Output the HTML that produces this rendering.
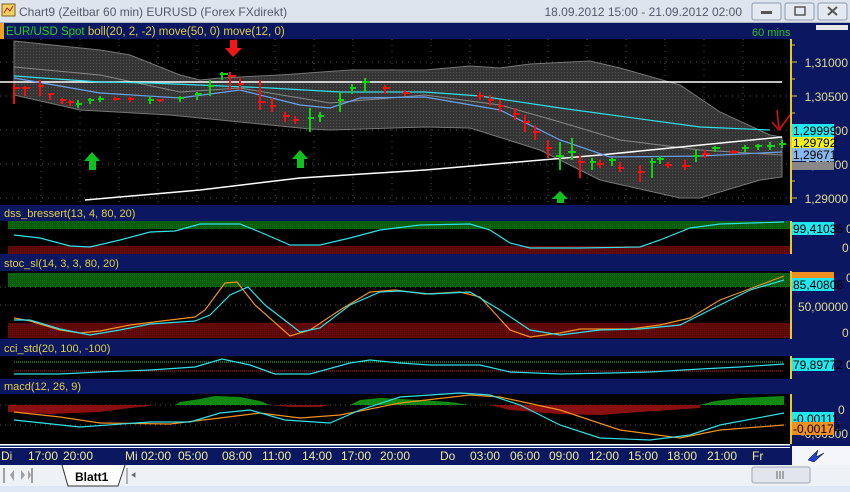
<!DOCTYPE html>
<html><head><meta charset="utf-8"><style>
html,body{margin:0;padding:0;width:850px;height:492px;overflow:hidden;background:#dfe6ef;font-family:"Liberation Sans",sans-serif}
svg{display:block}
</style></head><body>
<svg width="850" height="492" viewBox="0 0 850 492" xmlns="http://www.w3.org/2000/svg" font-family="Liberation Sans, sans-serif">
<defs>
<pattern id="dots" width="3" height="3" patternUnits="userSpaceOnUse"><rect width="3" height="3" fill="#353535"/><rect width="1" height="1" fill="#505050"/></pattern>
<pattern id="gdots" width="2" height="2" patternUnits="userSpaceOnUse"><rect width="2" height="2" fill="#0c5a0c"/><rect width="1" height="1" fill="#0a7010"/></pattern>
<pattern id="rdots" width="2" height="2" patternUnits="userSpaceOnUse"><rect width="2" height="2" fill="#5a0808"/><rect width="1" height="1" fill="#700c0c"/></pattern>
</defs>
<!-- title bar -->
<rect x="0" y="0" width="850" height="23" fill="#dde4ee"/>
<rect x="0" y="22" width="850" height="1" fill="#aab4c4"/>
<rect x="2" y="4" width="13" height="12" fill="#f4d060" stroke="#806020" stroke-width="1"/>
<path d="M4 13 L7 8 L10 11 L13 6" stroke="#c02020" fill="none"/>
<text x="19" y="16" font-size="12" fill="#505a6a">Chart9 (Zeitbar 60 min)  EURUSD (Forex FXdirekt)</text>
<text x="742" y="16" font-size="12" fill="#505a6a" text-anchor="end">18.09.2012 15:00 - 21.09.2012 02:00</text>
<g fill="#e4e9f1" stroke="#8e9aae"><rect x="752" y="3" width="29" height="17" rx="2"/><rect x="785" y="3" width="29" height="17" rx="2"/><rect x="818" y="3" width="29" height="17" rx="2"/></g>
<rect x="761" y="11" width="11" height="3" fill="#555"/>
<rect x="795" y="7" width="10" height="8" fill="none" stroke="#555" stroke-width="1.5"/>
<path d="M828 7 L837 15 M837 7 L828 15" stroke="#555" stroke-width="2"/>
<!-- navy backgrounds -->
<rect x="0" y="23" width="850" height="442" fill="#0b1760"/>
<!-- main chart -->
<rect x="0" y="39" width="790" height="166" fill="#000"/>
<rect x="0" y="23" width="4" height="16" fill="#f0a020"/>
<text x="6" y="35" font-size="11.5" fill="#20d020">EUR/USD Spot <tspan fill="#e0d040">boll(20, 2, -2) move(50, 0) move(12, 0)</tspan></text>
<text x="752" y="36" font-size="11" fill="#20c020">60 mins</text>
<rect x="816" y="25" width="32" height="5" fill="#e8e8e8"/>
<!-- grid -->
<g stroke="#555" stroke-dasharray="1,5">
<path d="M0 62H790M0 96H790M0 130H790M0 164H790M0 198H790"/>
<path d="M41 39V205M80 39V205M119 39V205M158 39V205M197 39V205M236 39V205M275 39V205M314 39V205M353 39V205M392 39V205M431 39V205M470 39V205M509 39V205M548 39V205M587 39V205M626 39V205M665 39V205M704 39V205M743 39V205"/>
</g>
<!-- bollinger -->
<path d="M14 41 L100 50 L130 55 L180 75 L200 80 L220 78 L280 75 L350 70 L425 70 L470 66 L500 68 L530 64 L590 61 L620 68 L680 85 L720 112 L770 135 L782 137 L782 177 L760 180 L700 198 L680 198 L600 180 L540 150 L470 128 L425 127 L330 130 L310 129 L270 125 L170 115 L80 110 L14 95 Z" fill="url(#dots)" stroke="#777" stroke-width="1"/>
<polyline points="14,67 100,75 180,92 240,88 330,103 425,95 500,105 560,122 620,140 700,150 782,155" fill="none" stroke="#888"/>
<line x1="0" y1="82" x2="782" y2="82" stroke="#fff" stroke-width="1.5"/>
<polyline points="85,200 200,190 300,178 425,170 600,155 782,137" fill="none" stroke="#fff" stroke-width="1.5"/>
<polyline points="14,76 100,82 150,83 270,88 340,92 425,92 480,96 560,108 700,127 770,130" fill="none" stroke="#30e0e8" stroke-width="1.2"/>
<polyline points="14,78 100,93 180,98 240,90 300,105 330,108 360,98 425,97 500,110 560,140 610,157 700,156 782,152" fill="none" stroke="#6aa0f0" stroke-width="1.2"/>
<!-- candles -->
<g stroke="#f01010" stroke-width="2" fill="none">
<path d="M14 84V104M14 88H20M25 86V96M22 88H30M40 80V96M38 86H44M50 93V100M48 94H54M62 98V104M60 100H66M70 100V106M68 102H74M115 97V101M113 99H120M130 97V102M128 99H134M160 99V102M157 100H164M230 72V90M228 76H236M240 78V90M238 84H244M260 80V110M258 102H266M272 98V112M270 106H276M285 112V122M283 116H290M295 116V124M293 120H299M385 85V94M383 88H390M405 90V96M403 93H410M480 92V100M477 96H484M490 95V106M488 100H494M500 100V112M498 106H504M515 108V120M513 114H520M525 115V132M523 122H530M535 125V140M533 132H540M548 140V158M546 148H552M580 155V178M578 162H585M600 160V168M597 164H604M620 162V172M618 168H624M640 165V182M638 172H645M668 162V168M665 165H672M685 160V170M682 166H690M705 150V158M702 154H710M733 150V154M730 152H738"/>
</g>
<g stroke="#10d010" stroke-width="2" fill="none">
<path d="M78 100V108M76 104H82M90 98V104M88 100H94M100 96V102M98 99H104M150 96V104M148 100H154M180 96V102M178 98H184M197 92V100M195 94H202M210 80V96M208 86H214M222 72V80M220 74H228M310 108V132M308 118H314M320 112V122M318 116H324M340 92V112M338 100H344M352 84V94M350 88H356M365 78V92M362 82H370M560 142V170M556 156H564M572 138V160M568 152H576M592 158V170M590 162H596M612 158V166M609 160H616M652 158V178M650 162H656M660 156V164M657 159H664M696 150V162M693 156H700M715 146V152M712 148H720M745 145V152M742 148H749M758 144V150M755 146H762M770 142V150M767 146H775M782 140V148M779 144H786"/>
</g>
<!-- arrows -->
<g fill="#f01818"><rect x="230" y="40" width="7" height="8"/><path d="M225 48 L242 48 L233 57Z"/></g>
<g fill="#10c020"><path d="M92 152 L100 161 L84 161Z"/><rect x="89" y="161" width="7" height="9"/>
<path d="M300 150 L308 159 L292 159Z"/><rect x="297" y="159" width="7" height="9"/>
<path d="M560 191 L568 199 L552 199Z"/><rect x="557" y="198" width="7" height="5"/></g>
<path d="M777 110 L779 128 M772 122 L779 130 L790 115" stroke="#e01010" stroke-width="1.5" fill="none"/>
<!-- main axis -->
<rect x="790" y="39" width="2" height="164" fill="#e8c830"/>
<g stroke="#e8c830"><path d="M792 45h3M792 62h5M792 79h3M792 96h5M792 113h3M792 130h5M792 147h3M792 164h5M792 181h3M792 198h5"/></g>
<g font-size="12" fill="#e0dc90" text-anchor="end"><text x="848" y="67">1,31000</text><text x="848" y="101">1,30500</text><text x="848" y="135">1,30000</text><text x="848" y="169">1,29500</text><text x="848" y="203">1,29000</text></g>
<rect x="792" y="162" width="42" height="8" fill="#888"/>
<rect x="792" y="124" width="42" height="13" fill="#20e8f0"/><text x="793" y="135" font-size="12" fill="#000">1,29999</text>
<rect x="792" y="137" width="42" height="11" fill="#f0f020"/><text x="793" y="147" font-size="12" fill="#000">1,29792</text>
<rect x="792" y="148" width="42" height="13" fill="#88b8f0"/><text x="793" y="159" font-size="12" fill="#000">1,29671</text>
<!-- dss -->
<text x="4" y="217" font-size="11" fill="#e0d040">dss_bressert(13, 4, 80, 20)</text>
<rect x="0" y="221" width="790" height="33" fill="#000"/>
<rect x="8" y="221" width="782" height="8" fill="url(#gdots)"/>
<rect x="8" y="246" width="782" height="8" fill="url(#rdots)"/>
<polyline points="14,235 40,238 70,246 90,247 120,240 150,232 175,231 200,224 240,224 260,232 290,245 320,245 350,238 380,230 420,225 470,224 490,230 510,243 530,248 580,248 640,247 660,240 690,228 720,224 784,222" fill="none" stroke="#30e0e8" stroke-width="1.2"/>
<rect x="790" y="221" width="2" height="33" fill="#e8c830"/>
<rect x="792" y="222" width="42" height="13" fill="#20e8f0"/><text x="793" y="233" font-size="12" fill="#000">99,41035</text>
<text x="846" y="233" font-size="12" fill="#e0dc90">0</text><text x="842" y="252" font-size="12" fill="#e0dc90">0</text>
<!-- stoc -->
<text x="4" y="267" font-size="11" fill="#e0d040">stoc_sl(14, 3, 3, 80, 20)</text>
<rect x="0" y="271" width="790" height="68" fill="#000"/>
<rect x="8" y="273" width="782" height="14" fill="url(#gdots)"/>
<rect x="8" y="323" width="782" height="15" fill="url(#rdots)"/>
<path d="M0 305H790M0 287H790" stroke="#555" stroke-dasharray="1,4"/>
<polyline points="14,318 30,321 60,330 80,333 100,331 130,325 170,320 195,317 205,310 225,283 237,282 255,305 290,336 310,330 340,310 370,292 395,290 425,294 460,292 480,297 510,330 530,337 560,333 580,329 630,329 660,325 690,318 720,300 760,285 784,276" fill="none" stroke="#f09020" stroke-width="1.2"/>
<polyline points="14,320 30,320 60,329 90,335 120,330 150,324 195,321 210,315 230,295 248,287 265,305 300,332 320,328 350,305 380,292 400,291 430,294 470,292 500,310 530,330 560,335 600,330 640,329 680,325 710,310 750,290 784,280" fill="none" stroke="#30e0e8" stroke-width="1.2"/>
<rect x="790" y="271" width="2" height="68" fill="#e8c830"/>
<rect x="792" y="272" width="42" height="6" fill="#f09020"/>
<rect x="792" y="278" width="42" height="13" fill="#20e8f0"/><text x="793" y="289" font-size="12" fill="#000">85,40808</text>
<text x="846" y="282" font-size="12" fill="#e0dc90">0</text>
<text x="848" y="311" font-size="12" fill="#e0dc90" text-anchor="end">50,00000</text>
<text x="842" y="337" font-size="12" fill="#e0dc90">0</text>
<!-- cci -->
<text x="4" y="352" font-size="11" fill="#e0d040">cci_std(20, 100, -100)</text>
<rect x="0" y="356" width="790" height="23" fill="#000"/>
<line x1="14" y1="362" x2="784" y2="362" stroke="#30d030" stroke-dasharray="1,1"/>
<line x1="14" y1="371" x2="784" y2="371" stroke="#e02020" stroke-dasharray="1,1"/>
<polyline points="14,374 60,374 100,372 150,370 195,367 222,359 250,365 275,374 310,374 350,363 370,360 400,363 430,365 480,365 510,372 560,374 610,373 650,372 700,369 740,367 784,364" fill="none" stroke="#30e0e8" stroke-width="1.2"/>
<rect x="790" y="356" width="2" height="23" fill="#e8c830"/>
<rect x="792" y="358" width="42" height="13" fill="#20e8f0"/><text x="793" y="369" font-size="12" fill="#000">79,89772</text>
<text x="846" y="369" font-size="12" fill="#e0dc90">0</text>
<!-- macd -->
<text x="4" y="390" font-size="11" fill="#e0d040">macd(12, 26, 9)</text>
<rect x="0" y="394" width="790" height="50" fill="#000"/>
<path d="M0 405H790M0 425H790" stroke="#555" stroke-dasharray="1,4"/>
<path d="M8 405 L8 412 L50 414 L100 412 L130 408 L150 406 L150 405Z" fill="#8a1010"/>
<path d="M175 405 L180 402 L200 399 L215 396 L240 397 L260 401 L270 405Z" fill="#108a10"/>
<path d="M270 405 L290 407 L320 407 L330 405Z" fill="#8a1010"/>
<path d="M350 405 L360 400 L380 398 L420 400 L450 402 L470 405Z" fill="#108a10"/>
<path d="M490 405 L510 410 L560 414 L600 415 L640 412 L700 408 L700 405Z" fill="#8a1010"/>
<path d="M700 405 L715 401 L740 398 L784 396 L784 405Z" fill="#108a10"/>
<polyline points="14,412 60,417 100,423 170,424 220,418 260,413 300,418 340,415 400,403 470,395 500,397 560,410 620,430 680,438 720,430 784,425" fill="none" stroke="#f09020" stroke-width="1.2"/>
<polyline points="14,420 80,427 150,422 190,422 220,413 250,410 285,420 330,423 360,410 400,397 460,393 490,395 520,405 560,425 600,438 650,440 690,435 720,425 784,413" fill="none" stroke="#30e0e8" stroke-width="1.2"/>
<rect x="790" y="394" width="2" height="50" fill="#e8c830"/>
<text x="838" y="414" font-size="12" fill="#e0dc90">0</text>
<text x="848" y="438" font-size="12" fill="#e0dc90" text-anchor="end">-0,00500</text>
<rect x="792" y="412" width="42" height="13" fill="#20e8f0"/><text x="793" y="423" font-size="12" fill="#000">-0,00111</text>
<rect x="792" y="422" width="42" height="13" fill="#f09020"/><text x="793" y="433" font-size="12" fill="#000">-0,00174</text>
<!-- time axis -->
<rect x="0" y="444" width="790" height="1.5" fill="#fff"/>
<rect x="0" y="447" width="790" height="1" fill="#fff"/>
<rect x="792" y="446" width="58" height="19" fill="#f4f6fa"/>
<path d="M808 460 L818 450 L816 457 L824 453 L814 462Z" fill="#2040d0" stroke="#000" stroke-width="0.5"/>
<g font-size="12" fill="#ecec98">
<text x="1" y="460">Di</text><text x="28" y="460">17:00</text><text x="63" y="460">20:00</text><text x="125" y="460">Mi 02:00</text><text x="178" y="460">05:00</text><text x="222" y="460">08:00</text><text x="262" y="460">11:00</text><text x="302" y="460">14:00</text><text x="341" y="460">17:00</text><text x="380" y="460">20:00</text><text x="440" y="460">Do</text><text x="470" y="460">03:00</text><text x="510" y="460">06:00</text><text x="549" y="460">09:00</text><text x="589" y="460">12:00</text><text x="628" y="460">15:00</text><text x="667" y="460">18:00</text><text x="707" y="460">21:00</text><text x="752" y="460">Fr</text></g>
<!-- tab bar -->
<rect x="0" y="465" width="850" height="27" fill="#eef1f5"/>
<rect x="0" y="486" width="850" height="6" fill="#dde8f4"/>
<g fill="#a0a0a0"><path d="M3 468h2v15h-2zM10 475l4-5v11zM21 470l4 5-4 5zM31 468h2v15h-2zM28 470l3 5-3 5z"/></g>
<path d="M62 465 L68 486 L118 486 L125 465" fill="#fff" stroke="#333"/>
<text x="75" y="481" font-size="12" font-weight="bold" fill="#000">Blatt1</text>
<path d="M127 468V484M132 475l3-2v4z" stroke="#777" fill="#555"/>
<rect x="752" y="467" width="58" height="16" rx="2" fill="#e2e6ec" stroke="#a0a8b4"/>
<path d="M777 471v8M780 471v8M783 471v8" stroke="#666"/>
</svg>
</body></html>
